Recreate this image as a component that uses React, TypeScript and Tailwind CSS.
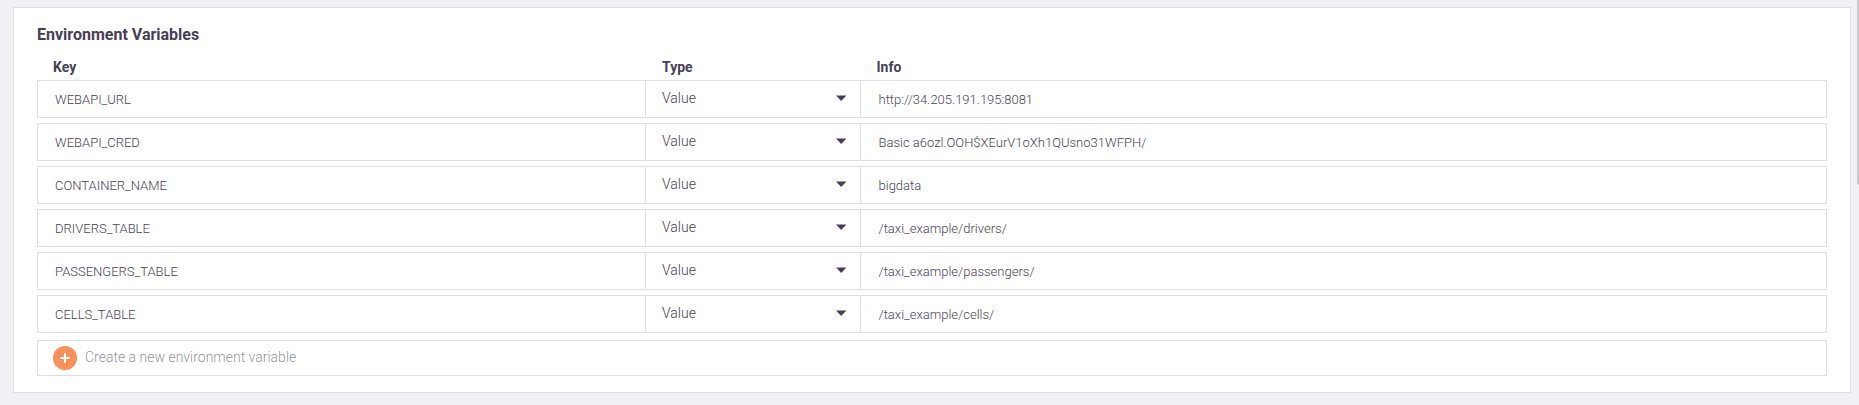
const variables = [
  { key: "WEBAPI_URL", info: "http://34.205.191.195:8081" },
  { key: "WEBAPI_CRED", info: "Basic a6ozl.OOH$XEurV1oXh1QUsno31WFPH/" },
  { key: "CONTAINER_NAME", info: "bigdata" },
  { key: "DRIVERS_TABLE", info: "/taxi_example/drivers/" },
  { key: "PASSENGERS_TABLE", info: "/taxi_example/passengers/" },
  { key: "CELLS_TABLE", info: "/taxi_example/cells/" },
];

function Row({ name, info }: { name: string; info: string }) {
  return (
    <div className="flex h-[38px] border border-[#dfdfe5] font-light text-[#483f56]">
      <div className="w-[607px] pl-[17px] pt-px text-[13px] leading-9">{name}</div>
      <div className="flex w-[215px] items-center justify-between border-l border-[#dfdfe5] pb-[2px] pl-4 pr-[13px]">
        <span className="text-[14px] leading-[34px]">Value</span>
        <svg width="11" height="6" viewBox="0 0 11 6" className="fill-[#483f56]">
          <path d="M0 .6h10.4L5.2 6z" />
        </svg>
      </div>
      <div className="flex-1 border-l border-[#dfdfe5] pl-[17.5px] pt-px text-[13px] leading-9">{info}</div>
    </div>
  );
}

export default function App() {
  return (
    <div className="flex h-[405px] w-[1859px] justify-between overflow-hidden bg-[#f0f0f5] font-['Roboto',sans-serif] text-[#483f56]">
      <section className="ml-[13px] mt-[7px] h-[386px] w-[1838px] border border-[#dfdfe5] bg-white px-[23px] pt-[17px]">
        <h2 className="text-[16px] font-bold leading-5">Environment Variables</h2>
        <div className="mt-[14px] flex h-[21px] pl-4 text-[14px] font-bold leading-4">
          <div className="w-[609px]">Key</div>
          <div className="w-[214.5px]">Type</div>
          <div>Info</div>
        </div>
        <div className="flex flex-col gap-[5px]">
          {variables.map((v) => (
            <Row key={v.key} name={v.key} info={v.info} />
          ))}
        </div>
        <button className="mt-[7px] flex h-9 w-full items-center gap-2 border border-[#dfdfe5] pb-px pl-[15px] text-[14px] font-light text-[#483f56]/60">
          <svg width="24" height="24" viewBox="0 0 24 24">
            <circle cx="12" cy="12" r="12" fill="#fa9058" />
            <path d="M12 7v10M7 12h10" stroke="white" strokeWidth="2" />
          </svg>
          <span className="pb-px">Create a new environment variable</span>
        </button>
      </section>
      <div className="h-[185px] w-[2px] rounded-bl-sm bg-[#cbcacf]" />
    </div>
  );
}
